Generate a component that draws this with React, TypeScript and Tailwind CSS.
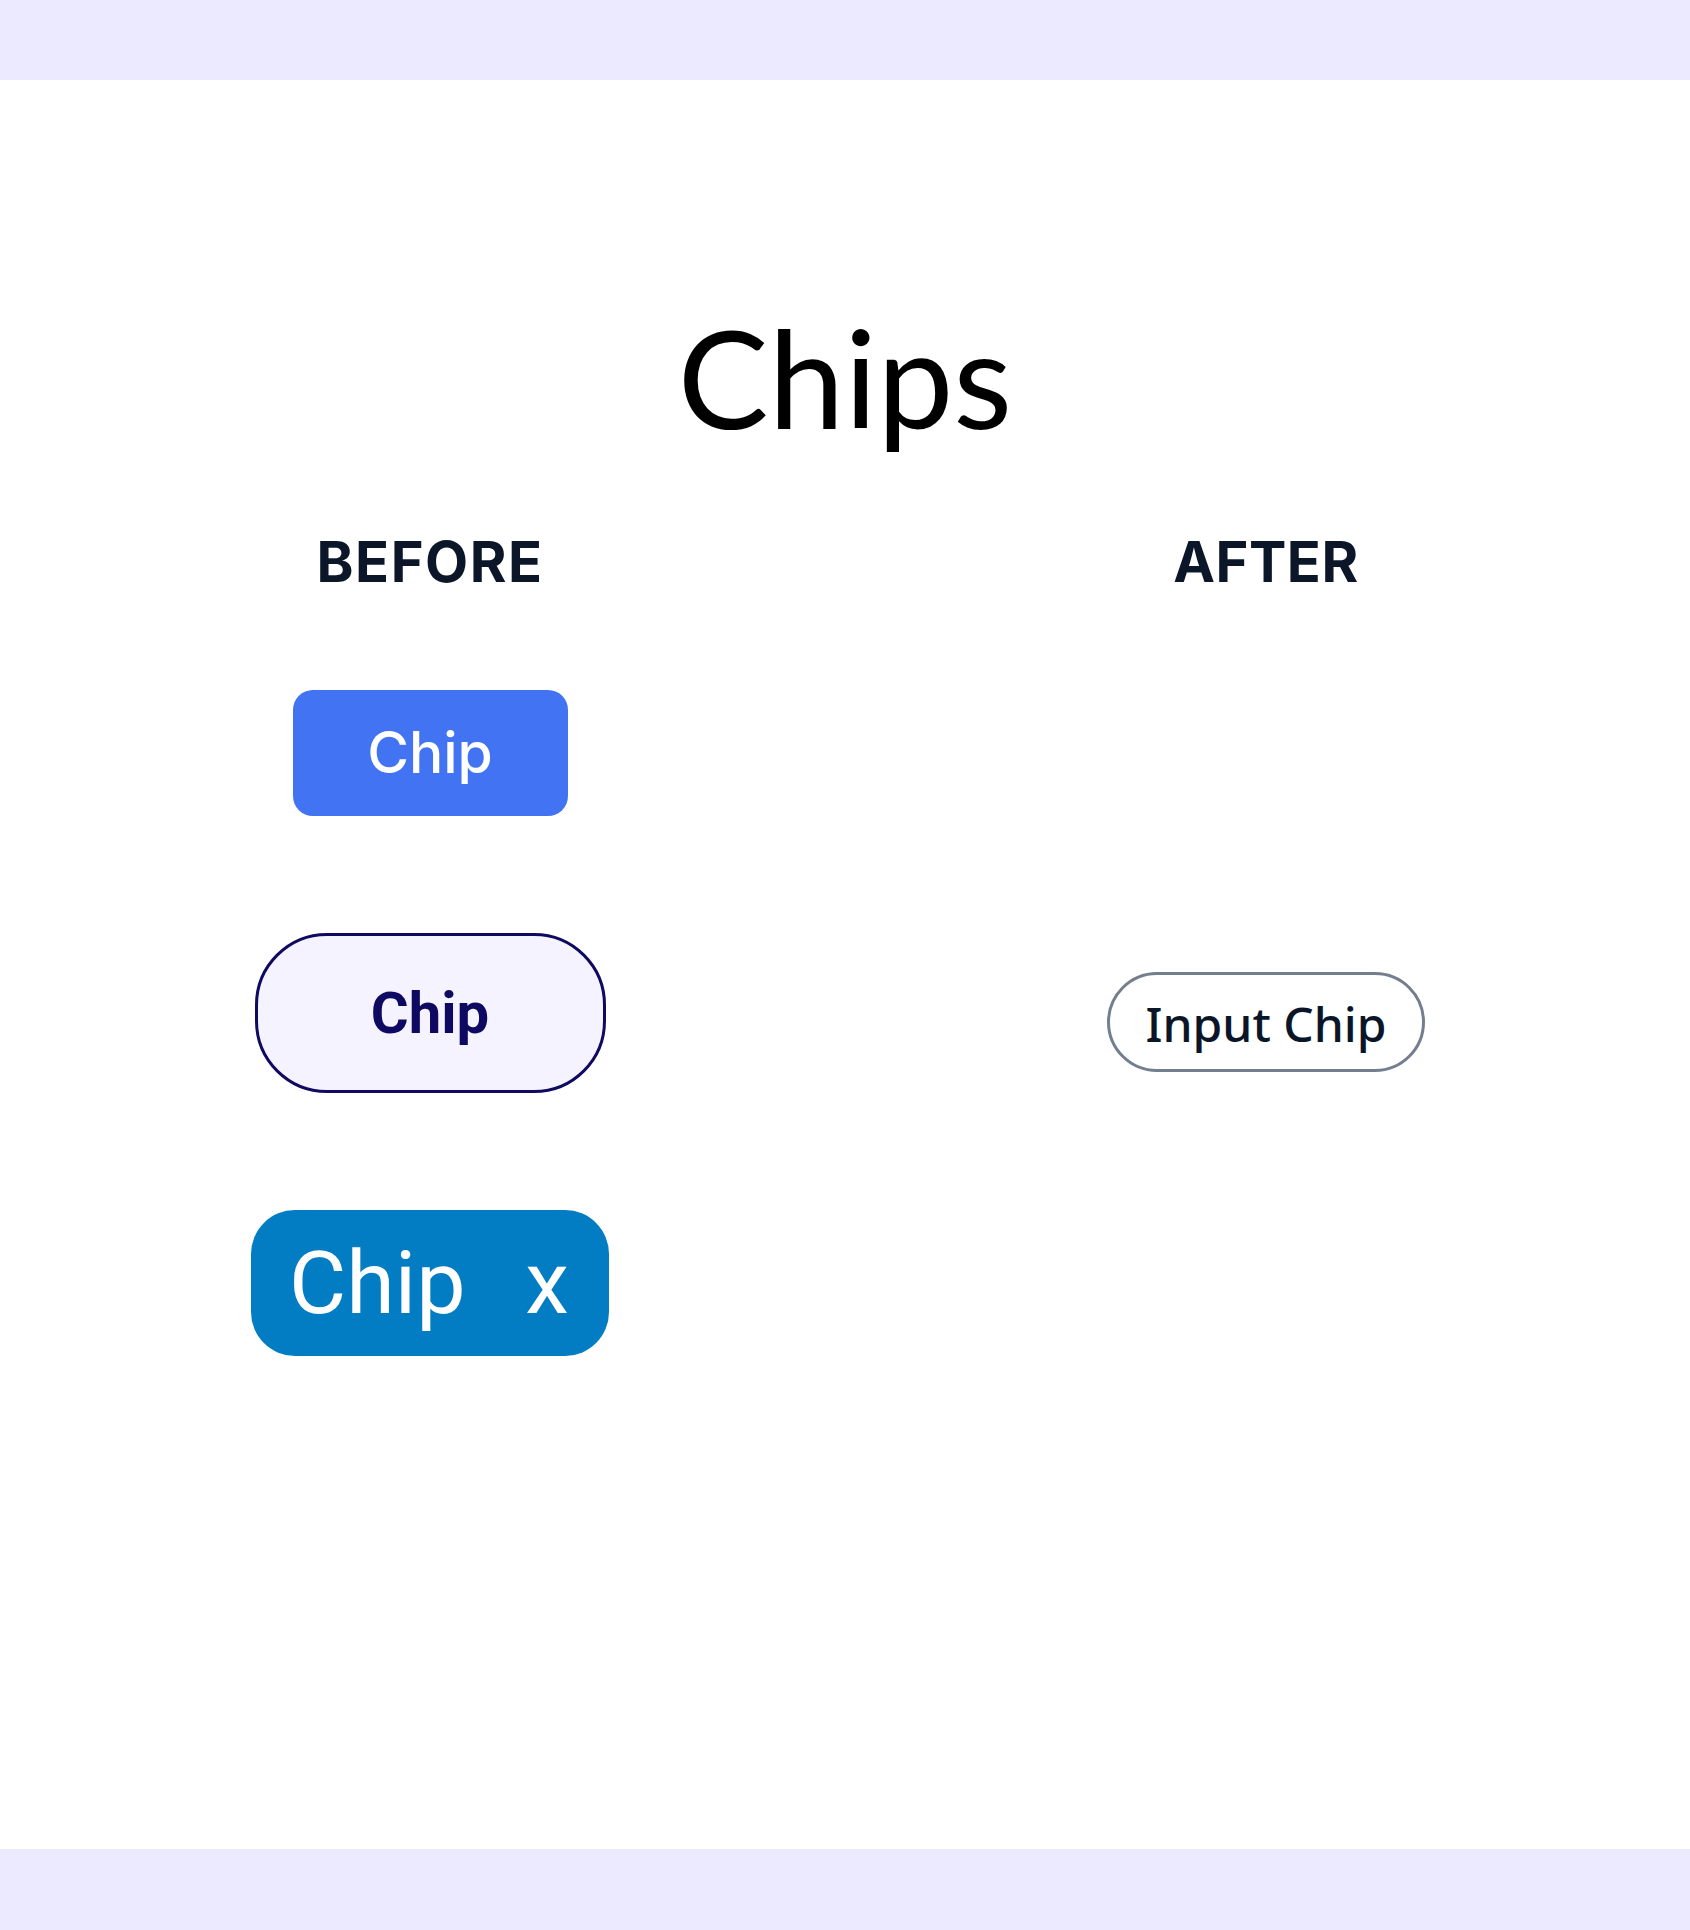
export default function App() {
  return (
    <div className="min-h-screen h-[1930px] flex flex-col bg-white">
      <div className="h-[80px] bg-[#ECEAFE]" />

      <main className="flex-1 pt-[229px]">
        <h1 className="text-center text-[136px] leading-[136px] text-black font-['Lato',sans-serif]">
          Chips
        </h1>

        <div className="grid grid-cols-2 pl-[12px] pr-[6px] mt-[89px]">
          {/* Before */}
          <div className="flex flex-col items-center">
            <h2 className="text-[56px] leading-[56px] font-bold tracking-[1.5px] text-[#0B1628] font-['Inter',sans-serif]">
              BEFORE
            </h2>

            <div className="mt-[100px] flex flex-col items-center gap-[117px]">
              <button className="w-[275px] h-[126px] rounded-[20px] bg-[#4173F2] text-white text-[57px] font-medium font-['Inter',sans-serif] flex items-center justify-center">
                Chip
              </button>

              <button className="w-[351px] h-[160px] rounded-[72px] border-[3px] border-[#0F0A5F] bg-[#F5F3FF] text-[#0E0961] text-[58px] font-bold font-['Roboto',sans-serif] flex items-center justify-center">
                Chip
              </button>

              <button className="w-[358px] h-[146px] rounded-[44px] bg-[#027DC3] text-white text-[88px] font-['Roboto',sans-serif] flex items-center justify-between pl-[38px] pr-[40px]">
                <span>Chip</span>
                <span>x</span>
              </button>
            </div>
          </div>

          {/* After */}
          <div className="flex flex-col items-center">
            <h2 className="text-[56px] leading-[56px] font-bold tracking-[0.5px] text-[#0B1628] font-['Inter',sans-serif]">
              AFTER
            </h2>

            <button className="mt-[382px] w-[318px] h-[100px] rounded-full border-[3px] border-[#737E8E] bg-white text-[#0A1628] text-[48px] font-medium font-['Noto_Sans',sans-serif] flex items-center justify-center pt-[4px]">
              Input Chip
            </button>
          </div>
        </div>
      </main>

      <div className="h-[81px] bg-[#ECEAFE]" />
    </div>
  )
}
